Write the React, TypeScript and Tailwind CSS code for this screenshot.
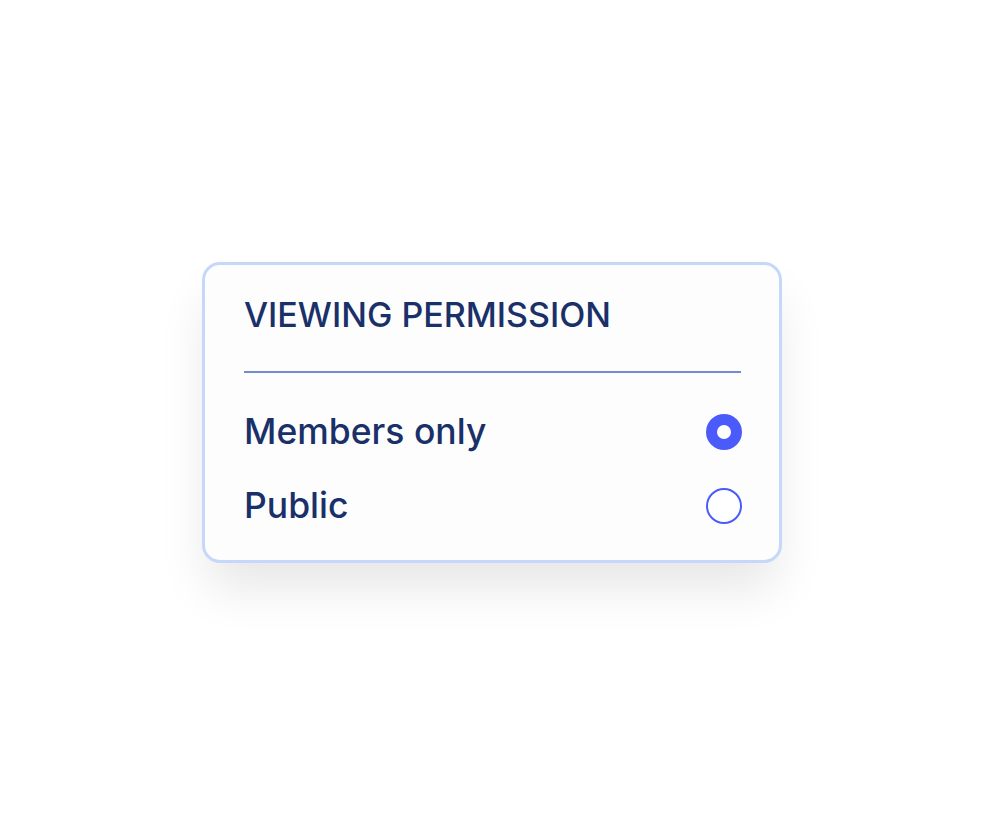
import { useState } from 'react';

const options = [
  { id: 'members', label: 'Members only' },
  { id: 'public', label: 'Public' },
];

const App = () => {
  const [value, setValue] = useState('members');

  return (
    <div
      className="flex min-h-screen items-center justify-center bg-white"
      style={{ fontFamily: 'Inter, "Noto Sans", sans-serif' }}
    >
      {/* Permission card */}
      <div className="w-[580px] rounded-[18px] border-[3.5px] border-[#c6d8fa] bg-[#fdfdfe] pl-[39px] pr-[37px] pt-[33px] pb-[36px] shadow-[0_30px_50px_-6px_rgba(0,0,0,0.1)]">
        <h2 className="text-[34px] leading-[34px] font-medium text-[#1a3068]">
          VIEWING PERMISSION
        </h2>
        <div className="mt-[39px] mr-[1px] h-[1.5px] bg-[#7589d4]"></div>

        <div className="mt-[41px] flex flex-col gap-[38px]">
          {options.map((opt) => {
            const checked = value === opt.id;
            return (
              <button
                key={opt.id}
                type="button"
                onClick={() => setValue(opt.id)}
                className="flex h-[36px] items-center justify-between text-left"
              >
                <span className="text-[35.5px] leading-[36px] font-medium text-[#1a3068]">
                  {opt.label}
                </span>
                {checked ? (
                  <span className="flex h-[36px] w-[36px] items-center justify-center rounded-full bg-[#4b5bfb]">
                    <span className="h-[14px] w-[14px] rounded-full bg-white"></span>
                  </span>
                ) : (
                  <span className="h-[36px] w-[36px] rounded-full border-2 border-[#4b5bfb] bg-white"></span>
                )}
              </button>
            );
          })}
        </div>
      </div>
    </div>
  );
};

export default App;
